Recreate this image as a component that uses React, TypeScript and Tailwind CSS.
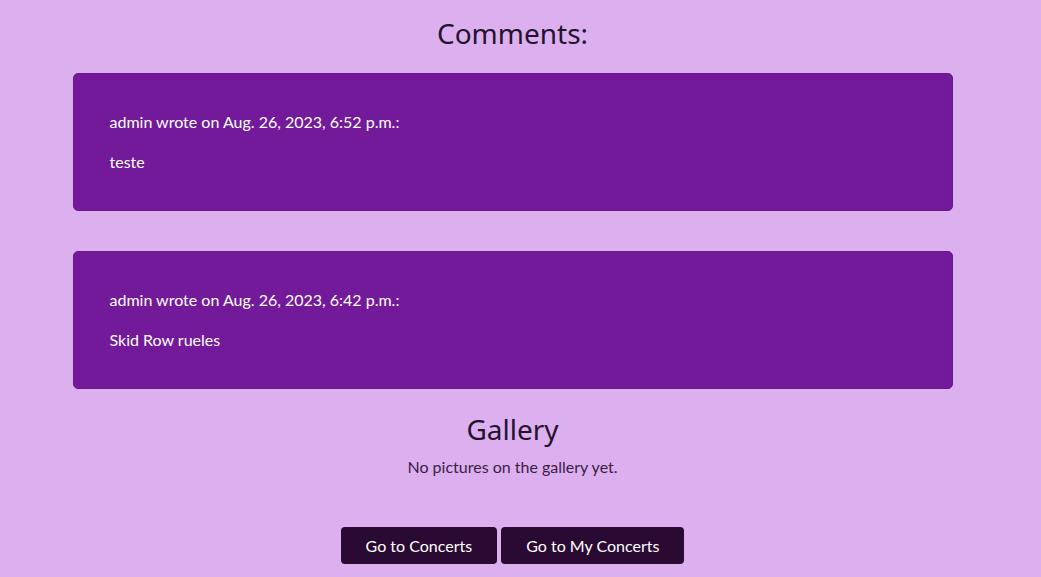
export default function App() {
  const comments = [
    { author: "admin", date: "Aug. 26, 2023, 6:52 p.m.", body: "teste" },
    { author: "admin", date: "Aug. 26, 2023, 6:42 p.m.", body: "Skid Row rueles" },
  ]

  return (
    <div className="min-h-[577px] bg-[#dcb0ef] pr-[16px] font-['Lato',sans-serif] text-[#24122e]">
      <div className="mx-auto w-[880px] pt-[13px]">
        {/* Comments */}
        <h2 className="text-center text-[28px] leading-[40px] font-['Noto_Sans',sans-serif] font-normal">
          Comments:
        </h2>
        <div className="mt-[20px] flex flex-col gap-[40px]">
          {comments.map((c, i) => (
            <div
              key={i}
              className="rounded-[5px] border border-[#681790] bg-[#721a9a] px-[36px] py-[36px] text-[16px] leading-[24px] text-white"
            >
              <p>
                {c.author} wrote on {c.date}:
              </p>
              <p className="mt-[16px]">{c.body}</p>
            </div>
          ))}
        </div>

        {/* Gallery */}
        <h2 className="mt-[20px] text-center text-[28px] leading-[40px] font-['Noto_Sans',sans-serif] font-normal">
          Gallery
        </h2>
        <p className="mt-[6px] text-center text-[16px] leading-[24px] text-[#3a1d45]">
          No pictures on the gallery yet.
        </p>

        <div className="mt-[48px] flex justify-center gap-[4px]">
          <button className="h-[37px] rounded-[4px] bg-[#2a0a33] px-[25px] text-[16px] text-white">
            Go to Concerts
          </button>
          <button className="h-[37px] rounded-[4px] bg-[#2a0a33] px-[25px] text-[16px] text-white">
            Go to My Concerts
          </button>
        </div>
      </div>
    </div>
  )
}
